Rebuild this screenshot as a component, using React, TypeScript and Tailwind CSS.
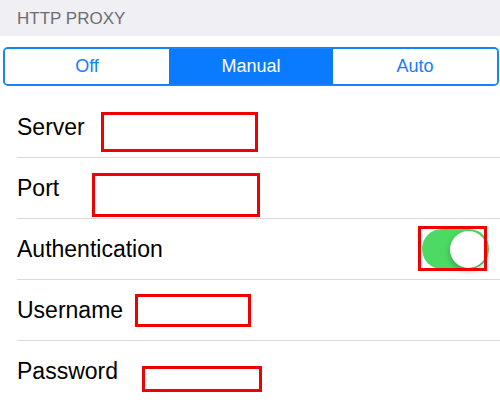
import React from "react";

const font = { fontFamily: '"Liberation Sans", Arial, sans-serif' };

interface FieldRowProps {
  label: string;
  children?: React.ReactNode;
  last?: boolean;
}

const FieldRow = ({ label, children, last }: FieldRowProps) => (
  <div
    className={`h-[61px] ml-[17px] flex items-center ${
      last ? "" : "border-b border-[#d9d9dc]"
    }`}
  >
    <span className="text-[23px] text-black leading-none">{label}</span>
    {children}
  </div>
);

const Toggle = () => (
  <div className="relative ml-auto mr-[11px]">
    <div className="w-[67px] h-[40px] rounded-full bg-[#4cd964] flex items-center justify-end pr-[2px]">
      <div className="w-[37px] h-[37px] rounded-full bg-white shadow-[0_3px_6px_rgba(0,0,0,0.25)]" />
    </div>
    <div className="absolute -left-[4px] right-[2px] -top-[3px] -bottom-[2px] border-[3px] border-[#f00000]" />
  </div>
);

export default function App() {
  const modes = ["Off", "Manual", "Auto"];
  const active = 1;

  return (
    <div className="w-[500px] h-[400px] bg-white overflow-hidden" style={font}>
      <div className="h-[36px] bg-[#efeff4] flex items-center pl-[17px] pt-[1px]">
        <span className="text-[17px] text-[#6d6d72] leading-none">HTTP PROXY</span>
      </div>

      <div className="pt-[11px] pb-[11px] pl-[3px] pr-[1px]">
        <div className="h-[39px] grid grid-cols-3 border-[2px] border-[#1a82fb] rounded-[5px] overflow-hidden">
          {modes.map((m, i) => (
            <div
              key={m}
              className={`flex items-center justify-center text-[18px] ${
                i === active ? "bg-[#0a7aff] text-white" : "bg-white text-[#157efb]"
              }`}
            >
              {m}
            </div>
          ))}
        </div>
      </div>

      <FieldRow label="Server">
        <div className="ml-[16px] mt-[9px] w-[157px] h-[40px] border-[3px] border-[#f00000]" />
      </FieldRow>
      <FieldRow label="Port">
        <div className="ml-[33px] mt-[13px] w-[168px] h-[44px] border-[3px] border-[#f00000]" />
      </FieldRow>
      <FieldRow label="Authentication">
        <Toggle />
      </FieldRow>
      <FieldRow label="Username">
        <div className="ml-[12px] w-[116px] h-[33px] border-[3px] border-[#f00000]" />
      </FieldRow>
      <FieldRow label="Password" last>
        <div className="ml-[24px] mt-[15px] w-[120px] h-[26px] border-[3px] border-[#f00000]" />
      </FieldRow>
    </div>
  );
}
